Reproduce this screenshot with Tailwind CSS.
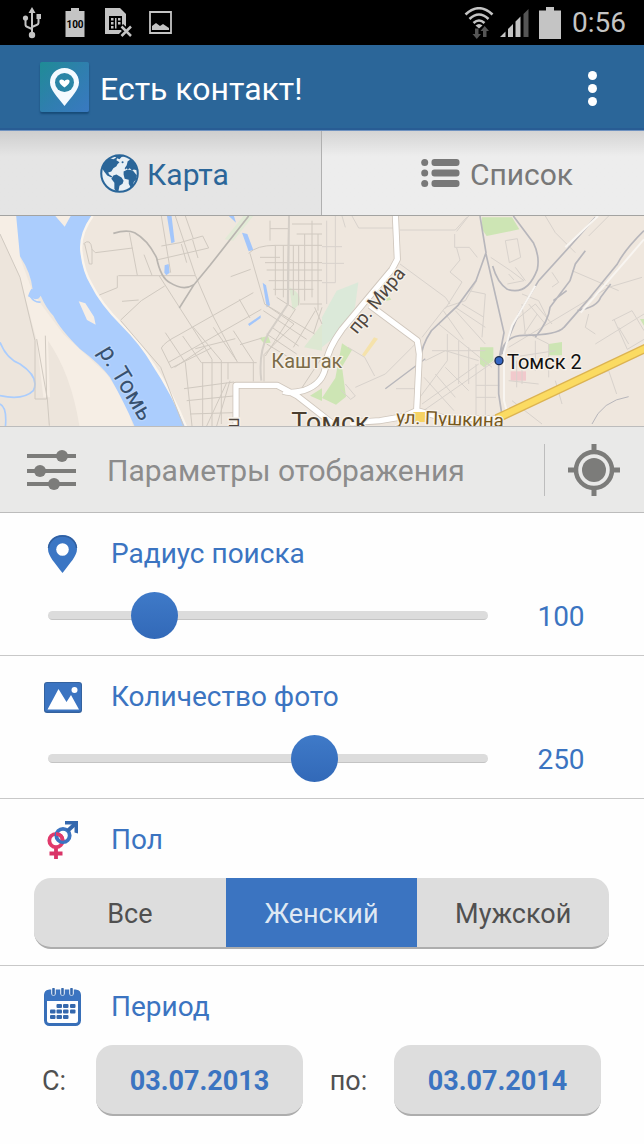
<!DOCTYPE html>
<html lang="ru">
<head>
    <meta charset="UTF-8">
    <meta name="viewport" content="width=device-width, initial-scale=1.0">
    <title>Есть контакт!</title>
    <script src="https://cdn.jsdelivr.net/npm/@tailwindcss/browser@4"></script>
</head>
<body class="min-h-screen flex flex-col bg-[#fefefe] font-['Roboto',sans-serif] text-[28px] leading-none">

    <!-- Status bar -->
    <div class="flex items-center h-[45px] bg-black text-[#c4c4c4] pl-[22px] pr-[18px]">
        <svg class="w-5 h-8" viewBox="0 0 20 32" fill="none" stroke="currentColor" stroke-width="2">
            <path d="M10 5v22M3.500 12v5.500q0 2 2 2.500l4.500 2M16.500 10v5.500q0 2-2 2.500L10 20"/>
            <path d="M10 0l3.500 6h-7zM14.500 7h4.500v5h-4.500z" fill="currentColor" stroke="none"/>
            <circle cx="3.500" cy="11" r="2.600" fill="currentColor" stroke="none"/>
            <circle cx="10" cy="28" r="3.200" fill="currentColor" stroke="none"/>
        </svg>
        <svg class="w-5 h-[29px] ml-[23px]" viewBox="0 0 20 29">
            <path d="M6 0h8v3h5.500v26H.500V3H6z" fill="currentColor"/>
            <text x="10" y="20" text-anchor="middle" font-size="10" font-weight="700" fill="#000">100</text>
        </svg>
        <svg class="w-7 h-[29px] ml-5" viewBox="0 0 28 29">
            <path d="M0 0h15l6 6v12l-6 8H0z" fill="currentColor"/>
            <path d="M4 8h13v14H4z" fill="#000"/>
            <path d="M6 10h2.500v2.500H6zM6 14h2.500v2.500H6zM6 18h2.500v2.500H6zM10 10h1.500v10.500H10zM13 10h2.500v2.500H13zM13 14h2.500v2.500H13z" fill="currentColor"/>
            <path d="M16 18l10 10M26 18L16 28" stroke="#000" stroke-width="6"/>
            <path d="M16.500 18.500l9.500 9.500M26 18.500L16.500 28" stroke="currentColor" stroke-width="2.500"/>
        </svg>
        <svg class="w-[23px] h-[23px] ml-4" viewBox="0 0 23 23">
            <path d="M1 1h21v21H1z" fill="none" stroke="currentColor" stroke-width="1.800"/>
            <path d="M3 19v-4l4-3 4 3 3-2 6 4v2z" fill="currentColor"/>
        </svg>
        <div class="flex items-center ml-auto">
            <svg class="w-[30px] h-8" viewBox="0 0 30 32" fill="none" stroke="currentColor" stroke-width="2.600">
                <path d="M1.500 7.500Q15-5 28.500 7.500M5.500 12q9.500-9 19 0M9.500 16q5.500-5 11 0"/>
                <path d="M11.500 18.500q3.500-3 7 0L15 21.500z" fill="currentColor" stroke="none"/>
                <path d="M11 21.500h3.500v5.500h2.500l-4.200 5-4.300-5H11zM19 30v-6h-2.500l4.200-5 4.300 5h-2.500v6z" fill="#555" stroke="none"/>
            </svg>
            <svg class="w-[29px] h-7 ml-1.5" viewBox="0 0 29 28">
                <path d="M0 28l5.500-5.500V28zM8 28V20l5-5v13zM15.500 28V12.500l5-5V28z" fill="currentColor"/>
                <path d="M23.500 28V5L28.500 0v28z" fill="#555"/>
            </svg>
            <svg class="w-[22px] h-8 ml-2.5" viewBox="0 0 22 32"><path d="M7 0h8v3.500h7V32H0V3.500h7z" fill="currentColor"/></svg>
            <span class="ml-[11px]">0:56</span>
        </div>
    </div>

    <!-- App bar -->
    <header class="flex items-center h-[85px] bg-[#2b6699] border-b-2 border-[#285c94] pl-10 pr-9 text-white">
        <svg class="w-[49px] h-[50px] rounded-xs shadow-[0_2px_2px_#174b78]" viewBox="0 0 49 50">
            <defs>
                <linearGradient id="logo" x1="0" y1="0" x2="1" y2="1">
                    <stop offset="0" stop-color="#1f8c96"/>
                    <stop offset=".5" stop-color="#2f7fae"/>
                    <stop offset="1" stop-color="#3979c1"/>
                </linearGradient>
            </defs>
            <rect width="49" height="50" fill="url(#logo)"/>
            <path d="M24.500 6C16 6 10 12.500 10 20.500c0 7 7 14 14.500 23.500C32 34.500 39 27.500 39 20.500 39 12.500 33 6 24.500 6z" fill="#f4faff"/>
            <circle cx="24.500" cy="20.500" r="9.500" fill="#2b85a6"/>
            <path d="M24.500 25.500c-7-4.500-5.500-8-3-8 1.500 0 2.500.8 3 1.800.5-1 1.500-1.800 3-1.800 2.500 0 4 3.500-3 8z" fill="#fff"/>
        </svg>
        <h1 class="ml-[11px] pt-1 text-[32px]">Есть контакт!</h1>
        <button type="button" aria-label="Меню" class="ml-auto flex flex-col items-center gap-1 w-8 pt-1">
            <span class="size-[9px] rounded-full bg-white"></span>
            <span class="size-[9px] rounded-full bg-white"></span>
            <span class="size-[9px] rounded-full bg-white"></span>
        </button>
    </header>

    <!-- Tabs -->
    <nav class="grid grid-cols-2 h-[86px] border-t border-[#6f92c0] border-b border-b-[#a3a3a1] text-[30px]">
        <button type="button" class="flex items-center justify-center gap-2 pl-2 bg-linear-to-b from-[#cecece] to-[#e5e5e5] to-30% border-r border-[#b0b0b0] text-[#2b6699]">
            <svg class="size-[39px]" viewBox="0 0 38 38">
                <circle cx="19" cy="19" r="17.800" fill="#e9f0f5" stroke="currentColor" stroke-width="2"/>
                <g fill="currentColor">
                    <path d="M4 9l5-5 4 1 4-2-1 3 3 2-2 2-1 2-3 2-2 3-3 1 1 2 3 2-1 1-4-2-3-4-2-3z"/>
                    <path d="M13 21l3-1 5 3 2 3-1 3-3 2-1 5-2 1-2-3v-6l-3-4z"/>
                    <path d="M23 17l4-2 5 1 4 5-1 4-2 2-1 4-2 2-2-4v-4l-4-1-1-4z"/>
                    <path d="M24 14l2-3 1-4 3-2 4 5 3 6-4-1-2 1-2-2-2 1-1-1-1 1zM14 2l6-1 4 1-3 1-2 2-3-1z"/>
                    <circle cx="22" cy="8" r="1"/>
                </g>
            </svg>
            <span class="pt-1">Карта</span>
        </button>
        <button type="button" class="flex items-center justify-center gap-2.5 pl-7 bg-linear-to-b from-[#d4d4d4] to-[#ededed] to-30% text-[#787878]">
            <svg class="w-[39px] h-7" viewBox="0 0 39 28" fill="currentColor">
                <circle cx="3.700" cy="3.500" r="3.500"/><rect x="10.500" width="28" height="7" rx="3"/>
                <circle cx="3.700" cy="14" r="3.500"/><rect x="10.500" y="10.500" width="28" height="7" rx="3"/>
                <circle cx="3.700" cy="24.500" r="3.500"/><rect x="10.500" y="21" width="28" height="7" rx="3"/>
            </svg>
            <span class="pt-1">Список</span>
        </button>
    </nav>

    <!-- Map -->
    <svg class="block w-full h-[210px] shrink-0 bg-[#efe7de]" viewBox="0 6 1932 630" preserveAspectRatio="xMidYMid slice" fill="none">
        <path d="M0 0h50l10 130 40 110 90 120 130 120 60 90 20 70H0z" fill="#f6eee5"/>
        <path d="M0 60l60 130 50 190 20 170h20l-6-170q70 100 95 260H0z" fill="#ede5dc"/>
        <!-- river -->
        <path d="M48 0h230q-40 60-36 110 6 60 30 100 30 60 90 120 60 60 95 120 60 90 100 190H405q-30-70-75-150-30-40-90-85-60-60-80-100-20-20-38-60-10 20-38 2 10-30 14-20-5-50-38-100z" fill="#abcdfd"/>
        <path d="M166 6l28 32 18-32zM236 262l20 6 26 40 5 24-26-14z" fill="#f6eee5"/>
        <path d="M92 248q10 18 30 16M0 385q20 50 60 65 60 40 40 80-30 30-100 15M0 570q22 10 16 70" stroke="#abcdfd" stroke-width="5"/>
        <path d="M500 0h14l10 84-10 4zM726 56l16 4 18 48-14 4zM494 154l12-4 3 26-10 8-6-8zM788 206l10 8 12 60-10 6zM744 330l38-26v8l-34 24zM680 0h20l8 26z" fill="#a3c6fb"/>
        <path d="M278 6q-38 52-34 104 6 60 30 100 30 60 90 120 60 60 95 120 60 90 100 190" stroke="#fbf5ed" stroke-width="7"/>
        <!-- parks -->
        <g fill="#cde5b4">
            <path d="M868 220q40 20 30 50l-20 20zM966 330v80l-54-10z" fill="#dde8d2"/>
            <path d="M778 372l26-6 8 20-20 2zM930 545l36-22v38zM1446 10h90l22 36-98 20-14-20zM1440 400h40v40l-28 20-12-10zM1646 390l40-6v40h-40zM1026 388l30 20-30 50 12 90-30 24-42-20 40-60zM1158 235l16 22-28 6zM1920 315h12v20z"/>
            <path d="M1010 230l65-25-10 75-50 80-49 40v-90z" fill="#dbe9d9"/>
        </g>
        <path d="M700 80L760 6h-30l-56 70z" fill="#e2ead6"/>
        <path d="M1134 374l-40 54-8-6 36-52z" fill="#f5e2ab"/>
        <path d="M1532 472h46v28h-46z" fill="#f1c9cc"/>
        <!-- minor streets, west -->
        <g stroke="#d0c9c0" stroke-width="3">
            <path d="M0 60l60 130 45 190v175h35l-4-190M110 375l32 180 6 80"/>
            <path d="M250 90q22-20 26 16l10 10 112-14M254 90l14 60h8v-45M388 56l24 128M355 185h230M352 185v36l-54 22M362 318l62-58 70-44M366 262l50-4M432 122l24 62M484 6l28 170M526 6l60 178 52 120 74 140M470 138l156-36-18-36-68 20-56 10M578 78l16 54M544 90l16 56M556 6l24 68"/>
            <path d="M478 186l128 200 30 50v200M362 320l120 140 70 180M496 356l60 90 20 190M484 402q10-18 50-38l226-128M504 446l280-160M484 402l30 60 120-60M524 460l90-60M548 366l56 80h166M580 340l84 100v190M700 350l60 92v60M718 256l32 56M608 446v190M684 446v50M552 524l150-20M560 560l140-14M570 600l130-4M640 340l70 100M586 404l120-30M720 392l66-20"/>
            <path d="M692 188l60-22M750 118l44 152 88 60-90 92v80M746 118q24-24 80-24h140M794 270l150 90M830 250l56 36-90 140M790 290l130 86M800 360l90 60M816 340l80 56M800 390l60 36M862 270l4-264M810 20v60M810 44h54M780 130h60M795 146h171M800 168h166M806 200h160M820 226h120M850 94v156M826 94v150M880 94v150M896 94v180M914 60v200M936 20v230M954 60v230M890 60h76M876 30h90M900 270h66M940 360l26-80M944 280l22 50M880 400l66-110M900 530l66-100"/>
            <path d="M690 500l-40 136M620 636l60-130"/>
        </g>
        <path d="M340 58q40-12 64-2 40 22 66 76 12 60 40 74 40 26 72 6l48-58L746 6M582 212l-44 70" stroke="#b9b5b0" stroke-width="5"/>
        <path d="M784 500q-10-80 20-140l60-90 3-264" stroke="#d4cec7" stroke-width="6"/>
        <g transform="translate(966 0)">
            <!-- minor streets, east -->
            <g stroke="#d8d2cc" stroke-width="3">
                <path d="M0 148h66M0 206h40M14 20v250M40 6v200M0 98h60M60 6l10 34M90 6l20 36h104M234 48h166l34-38M234 150l136 100 14 20M398 60v40h44l24 30M440 6l-36 46M404 102l10 36-30 36 36 30-50 80M300 370l70-90 60-20 34-60M340 340l60-60 90 60M364 290l60 86M350 330l160 130M400 290l90 100M420 270l66 40M440 230l50 10-10 130M376 360v80l-90 120M310 440l60-30 100 30M330 410h160M410 380v130M440 400v110M370 460l70 70M340 480l60 70M306 490l90 100M470 450L300 570M520 440L290 600M462 450v180M490 450v180M462 550h60M462 514h70M222 524h60M70 510l30 36-14 10-30-28M100 520l90-40 80-80 14-14M78 400l50 30 30 56"/>
                <path d="M550 80l36-6 10 56-34 16zM506 130l60 40 40 30-50 10M560 180l16 18M580 160l30 40M600 240l50 20 30 60M580 320l60-50 50 60M620 270l50 60M646 300l-40 60M600 270l10 90M560 400l300-180 100-30M570 430l130-20M620 360l60 30v100M584 440v80M600 440v70M640 380v90M560 500l90 10M700 500l20 70M680 540l180-70M860 470l24 70M820 390l146-90M870 320l60-30 36 60M890 340l30 50M800 300l-10 40 30 20M876 316l40 90 50-30M670 6l30 50 60 60M690 175l20 30-20 14M860 6l-60 60M750 170l140 60M570 560l90 70"/>
            </g>
            <!-- railways -->
            <g stroke="#b7b6bb" stroke-width="5">
                <path d="M474 6l18 110-30 84-54 74-80 76q-40 60-30 110M492 120l54 236-16 84v100l14 90M820 10l-70 80-100 110-60 100-50 120M574 6l60 80q20 40 12 80-30 80-90 60-30-20-44-70M966 50q-60 60-80 100l-90 110-70 80q-20 24-120 24-60 0-70 60M640 370q40-50 44-90l60-80 16-50 30-40M694 260l40-30M766 290q60-10 70-40l30-40"/>
                <path d="M190 524l80-60 40-30" stroke-width="4"/>
                <path d="M810 630q30-70 110-82" stroke-width="3"/>
            </g>
            <path d="M828 6L730 100M640 215l-70 120-24 80v145l8 30M966 76l-60 70-130 150" stroke="#f8f5f1" stroke-width="6"/>
        </g>
        <!-- main roads -->
        <g stroke-linejoin="round">
            <g stroke="#cfc6bc" stroke-width="21">
                <path d="M1186 0l6 136-16 30-150 180q-44 60-48 104-6 60-68 80-40 10-60 2M708 642V514h124l60 32 110 86"/>
                <path d="M1110 274l142 106 6 40-8 170-40 18-70 12-90 6M1250 590l90 24h150"/>
            </g>
            <g stroke="#fff" stroke-width="16">
                <path d="M1186 0l6 136-16 30-150 180q-44 60-48 104-6 60-68 80-40 10-60 2M708 642V514h124l60 32 110 86"/>
                <path d="M1110 274l142 106 6 40-8 170-40 18-70 12-90 6M1250 590l90 24h150"/>
            </g>
            <path d="M1490 614L1960 392" stroke="#dcb351" stroke-width="27"/>
            <path d="M1490 614L1960 392" stroke="#fbdb62" stroke-width="19"/>
            <path d="M1240 594h36v30h-36z" fill="#f5d263"/>
        </g>
        <circle cx="1497" cy="440" r="12" fill="#3566c4" stroke="#1b2a4a" stroke-width="4"/>
        <g font-size="60" stroke="#f7f2ea" stroke-width="8" stroke-linejoin="round" paint-order="stroke">
            <text transform="translate(294 412) rotate(59)" font-size="72" fill="#38516f" stroke="#b9d5fc">р. Томь</text>
            <text x="814" y="463" fill="#7c6c48">Каштак</text>
            <text x="1521" y="466" fill="#111">Томск 2</text>
            <text x="874" y="652" font-size="80" fill="#4b3f30">Томск</text>
            <text transform="translate(1070 362) rotate(-51)" font-size="56" fill="#4f4740">пр. Мира</text>
            <text transform="translate(1188 628) rotate(2)" font-size="56" fill="#76571b">ул. Пушкина</text>
            <text transform="translate(686 610) rotate(90)" font-size="56" fill="#4f4740">п</text>
        </g>
    </svg>

    <!-- Display options -->
    <div class="flex items-center h-[87px] bg-[#e9e9e8] border-t border-b border-[#bcbcbc] pl-[27px] pr-6 text-[#8c8c8c]">
        <svg class="w-[49px] h-10" viewBox="0 0 49 40" fill="#7c7c7a">
            <path d="M0 4h49v4H0zM0 19h49v4H0zM0 32h49v4H0z"/>
            <circle cx="35" cy="6" r="6"/><circle cx="13" cy="21" r="6"/><circle cx="27" cy="34" r="6"/>
        </svg>
        <h2 class="ml-[31px] pt-0.5 text-[30px]">Параметры отображения</h2>
        <div class="ml-auto w-px h-[52px] bg-[#bdbdbd]"></div>
        <button type="button" aria-label="Моё местоположение" class="ml-[23px]">
            <svg class="size-[52px]" viewBox="0 0 52 52" fill="none" stroke="#7c7c7a" stroke-width="5">
                <circle cx="26" cy="26" r="18" stroke-width="4.500"/>
                <circle cx="26" cy="26" r="12" fill="#7c7c7a" stroke="none"/>
                <path d="M26 0v8M26 44v8M0 26h8M44 26h8"/>
            </svg>
        </button>
    </div>

    <form class="text-[#3b74c1]">
        <section class="pt-4 pb-4 border-b border-[#c8c8c8]">
            <label for="radius" class="flex items-center h-12 pt-0.5 pl-[43px]">
                <svg class="w-[39px] h-[38px]" viewBox="0 0 39 38">
                    <path d="M19.500 0C11 0 5 6 5 14c0 7 7 14 14.500 24C27 28 34 21 34 14 34 6 28 0 19.500 0z" fill="#3b76c4"/>
                    <path d="M5.500 13C6 6 12 1 19.500 1S33 6 33.500 13" fill="none" stroke="#315f9f" stroke-width="1.500"/>
                    <circle cx="19.500" cy="14.500" r="6.300" fill="#fff"/>
                </svg>
                <span class="ml-[29px]">Радиус поиска</span>
            </label>
            <div class="flex items-center h-12 mt-3.5 pl-6 pr-[34px]">
                <div class="relative flex-1 flex items-center">
                    <div class="absolute inset-x-6 h-[9px] rounded-full bg-[#dcdcdc] border-b border-[#c4c4c4]"></div>
                    <input id="radius" type="range" min="0" max="413" value="100" class="relative w-full h-[47px] appearance-none bg-transparent [&::-webkit-slider-thumb]:appearance-none [&::-webkit-slider-thumb]:size-[47px] [&::-webkit-slider-thumb]:rounded-full [&::-webkit-slider-thumb]:bg-linear-to-b [&::-webkit-slider-thumb]:from-[#3f7ac8] [&::-webkit-slider-thumb]:to-[#3269b8]">
                </div>
                <output for="radius" class="w-[98px] pt-1 text-center">100</output>
            </div>
        </section>

        <section class="pt-4 pb-4 border-b border-[#c8c8c8]">
            <label for="photos" class="flex items-center h-12 pt-0.5 pl-[43px]">
                <svg class="w-[39px] h-[31px]" viewBox="0 0 39 31">
                    <rect x="1" y="0" width="38" height="31" rx="3" fill="#34629f"/>
                    <rect x="2" y="1" width="36" height="28.500" rx="2" fill="#3b74c1"/>
                    <path d="M4.500 27.500L15.500 7l8 13 4.500-7 8 14.500z" fill="#fff"/>
                    <circle cx="31.500" cy="8" r="3" fill="#fff"/>
                </svg>
                <span class="ml-[29px]">Количество фото</span>
            </label>
            <div class="flex items-center h-12 mt-3.5 pl-6 pr-[34px]">
                <div class="relative flex-1 flex items-center">
                    <div class="absolute inset-x-6 h-[9px] rounded-full bg-[#dcdcdc] border-b border-[#c4c4c4]"></div>
                    <input id="photos" type="range" min="0" max="413" value="250" class="relative w-full h-[47px] appearance-none bg-transparent [&::-webkit-slider-thumb]:appearance-none [&::-webkit-slider-thumb]:size-[47px] [&::-webkit-slider-thumb]:rounded-full [&::-webkit-slider-thumb]:bg-linear-to-b [&::-webkit-slider-thumb]:from-[#3f7ac8] [&::-webkit-slider-thumb]:to-[#3269b8]">
                </div>
                <output for="photos" class="w-[98px] pt-1 text-center">250</output>
            </div>
        </section>

        <fieldset class="pt-4 pb-4 border-b border-[#c8c8c8]">
            <div class="flex items-center h-12 pt-0.5 pl-[43px]">
                <svg class="w-[39px] h-[38px]" viewBox="0 0 39 38" fill="none" stroke-width="3.800">
                    <path d="M13 27v11M6.500 32.500h13" stroke="#d93467"/>
                    <circle cx="13" cy="19.500" r="6.700" stroke="#e03a6c"/>
                    <circle cx="20" cy="14.500" r="6.700" stroke="#3b74c1"/>
                    <path d="M24.500 10L32 3" stroke="#3468ae"/>
                    <path d="M22 0h13v12.500l-3.500-1V3.500H22z" fill="#3468ae"/>
                    <path d="M13 12.800a6.700 6.700 0 0 1 6.700 6.700" stroke="#e03a6c"/>
                </svg>
                <span id="gender-title" class="ml-[29px]">Пол</span>
            </div>
            <div role="radiogroup" aria-labelledby="gender-title" class="grid grid-cols-3 h-[71px] mt-[15px] ml-[34px] mr-[35px] rounded-[17px] overflow-hidden border-b-2 border-[#adadad] bg-[#dddddd] text-[27px] text-[#505050]">
                <label class="flex items-center justify-center pt-1 has-checked:bg-[#3b74c1] has-checked:text-[#dfe8f3]"><input type="radio" name="gender" class="sr-only">Все</label>
                <label class="flex items-center justify-center pt-1 has-checked:bg-[#3b74c1] has-checked:text-[#dfe8f3]"><input type="radio" name="gender" class="sr-only" checked>Женский</label>
                <label class="flex items-center justify-center pt-1 has-checked:bg-[#3b74c1] has-checked:text-[#dfe8f3]"><input type="radio" name="gender" class="sr-only">Мужской</label>
            </div>
        </fieldset>

        <section class="pt-4 pb-7">
            <div class="flex items-center h-12 pt-0.5 pl-[43px]">
                <svg class="w-[39px] h-[38px]" viewBox="0 0 39 38">
                    <rect x="2.500" y="3" width="34" height="33.500" rx="4" fill="#fff" stroke="#386fb8" stroke-width="3"/>
                    <path d="M2 13V6q0-4 4-4h27q4 0 4 4v7z" fill="#3b74c1"/>
                    <path d="M10.500 0v5.500M19.500 0v5.500M28.500 0v5.500" stroke="#fff" stroke-width="4.500" stroke-linecap="round"/>
                    <path d="M10.500 1v5M19.500 1v5M28.500 1v5" stroke="#3568ad" stroke-width="2.600" stroke-linecap="round"/>
                    <g fill="#3568ad">
                        <rect x="13.500" y="16" width="5.500" height="4" rx="1"/><rect x="20" y="16" width="5.500" height="4" rx="1"/><rect x="27" y="16" width="5.500" height="4" rx="1"/>
                        <rect x="7" y="21.500" width="5.500" height="4" rx="1"/><rect x="13.500" y="21.500" width="5.500" height="4" rx="1"/><rect x="20" y="21.500" width="5.500" height="4" rx="1"/><rect x="27" y="21.500" width="5.500" height="4" rx="1"/>
                        <rect x="7" y="27" width="5.500" height="4" rx="1"/><rect x="13.500" y="27" width="5.500" height="4" rx="1"/><rect x="20" y="27" width="5.500" height="4" rx="1"/>
                    </g>
                </svg>
                <span class="ml-[29px]">Период</span>
            </div>
            <div class="flex items-center mt-[15px] pl-[42px] pr-[43px] text-[27px] text-[#505050]">
                <span class="w-[54px] pt-0.5">С:</span>
                <button type="button" class="flex-1 h-[71px] pt-1 rounded-[17px] border-b-2 border-[#adadad] bg-[#dddddd] font-bold text-[#3b74c1]">03.07.2013</button>
                <span class="w-[91px] pt-0.5 text-center">по:</span>
                <button type="button" class="flex-1 h-[71px] pt-1 rounded-[17px] border-b-2 border-[#adadad] bg-[#dddddd] font-bold text-[#3b74c1]">03.07.2014</button>
            </div>
        </section>
    </form>
</body>
</html>
